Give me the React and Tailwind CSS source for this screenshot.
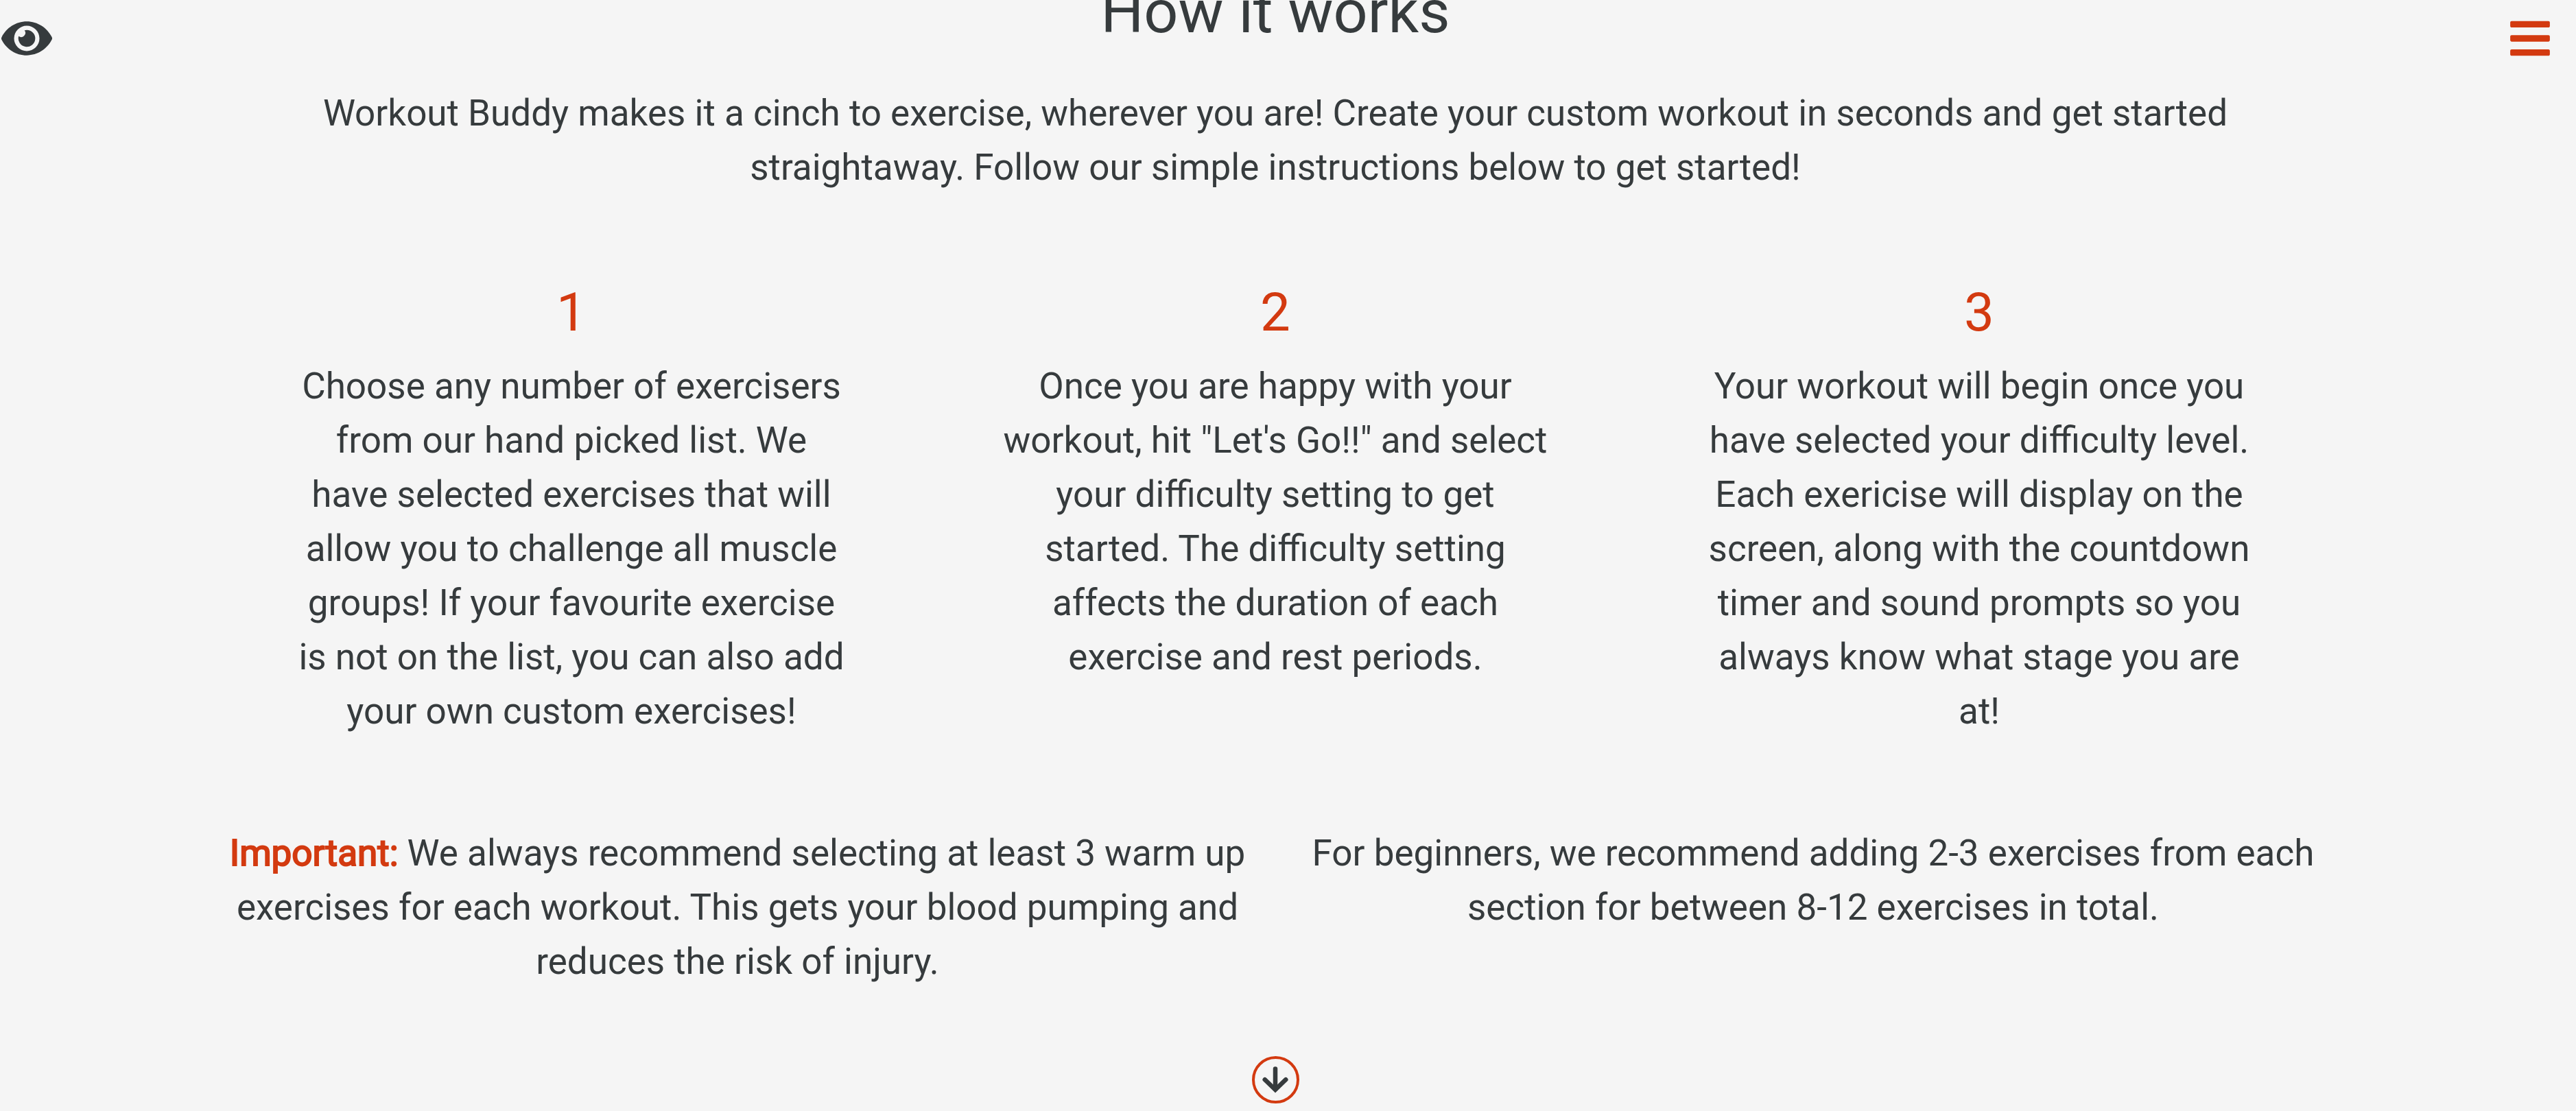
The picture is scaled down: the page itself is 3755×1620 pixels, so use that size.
import { FaEye, FaBars } from "react-icons/fa";

const steps = [
  { n: 1, text: "Choose any number of exercisers from our hand picked list. We have selected exercises that will allow you to challenge all muscle groups! If your favourite exercise is not on the list, you can also add your own custom exercises!" },
  { n: 2, text: "Once you are happy with your workout, hit \"Let's Go!!\" and select your difficulty setting to get started. The difficulty setting affects the duration of each exercise and rest periods." },
  { n: 3, text: "Your workout will begin once you have selected your difficulty level. Each exericise will display on the screen, along with the countdown timer and sound prompts so you always know what stage you are at!" },
];

function ArrowDown() {
  return (
    <svg viewBox="0 0 38 39" className="h-[39px] w-[38px]" fill="none" stroke="currentColor" strokeWidth="6.5" aria-hidden="true">
      <path d="M19 3.5V33" strokeLinecap="round" />
      <path d="M3.7 19.2L19 34L34.3 19.2" strokeLinecap="round" strokeLinejoin="miter" />
    </svg>
  );
}

export default function App() {
  return (
    <div className="relative h-screen overflow-hidden bg-[#f5f5f5] pr-[37px] text-center font-[Roboto,sans-serif] text-[53px] leading-[79px] text-[#363b3d]">
      <button aria-label="Toggle theme" className="absolute top-[19px] left-0.5 flex">
        <FaEye className="size-[74px]" />
      </button>
      <button aria-label="Menu" className="absolute top-[23px] right-[34px] flex text-[#d33a10]">
        <FaBars className="size-[66px]" />
      </button>
      <main className="px-80">
        <h1 className="-mt-7 text-[88px] leading-[90px]">How it works</h1>
        <p className="mt-16 px-24">
          Workout Buddy makes it a cinch to exercise, wherever you are! Create your custom workout in seconds and get started straightaway. Follow our simple instructions below to get started!
        </p>
        <ol className="mt-[122px] grid grid-cols-3">
          {steps.map((s) => (
            <li key={s.n} className="px-27">
              <h2 className="text-[78px] leading-[100px] text-[#d33a10]">{s.n}</h2>
              <p className="mt-[18px]">{s.text}</p>
            </li>
          ))}
        </ol>
        <div className="mt-32 grid grid-cols-2 gap-[58px]">
          <p>
            <strong className="font-normal text-[#d33a10] [-webkit-text-stroke:2px_#d33a10]">Important:</strong> We always recommend selecting at least 3 warm up exercises for each workout. This gets your blood pumping and reduces the risk of injury.
          </p>
          <p>For beginners, we recommend adding 2-3 exercises from each section for between 8-12 exercises in total.</p>
        </div>
        <a href="#next" aria-label="Scroll down" className="mx-auto mt-[98px] flex size-[69px] items-center justify-center rounded-full border-4 border-[#d33a10]">
          <ArrowDown />
        </a>
      </main>
    </div>
  );
}
